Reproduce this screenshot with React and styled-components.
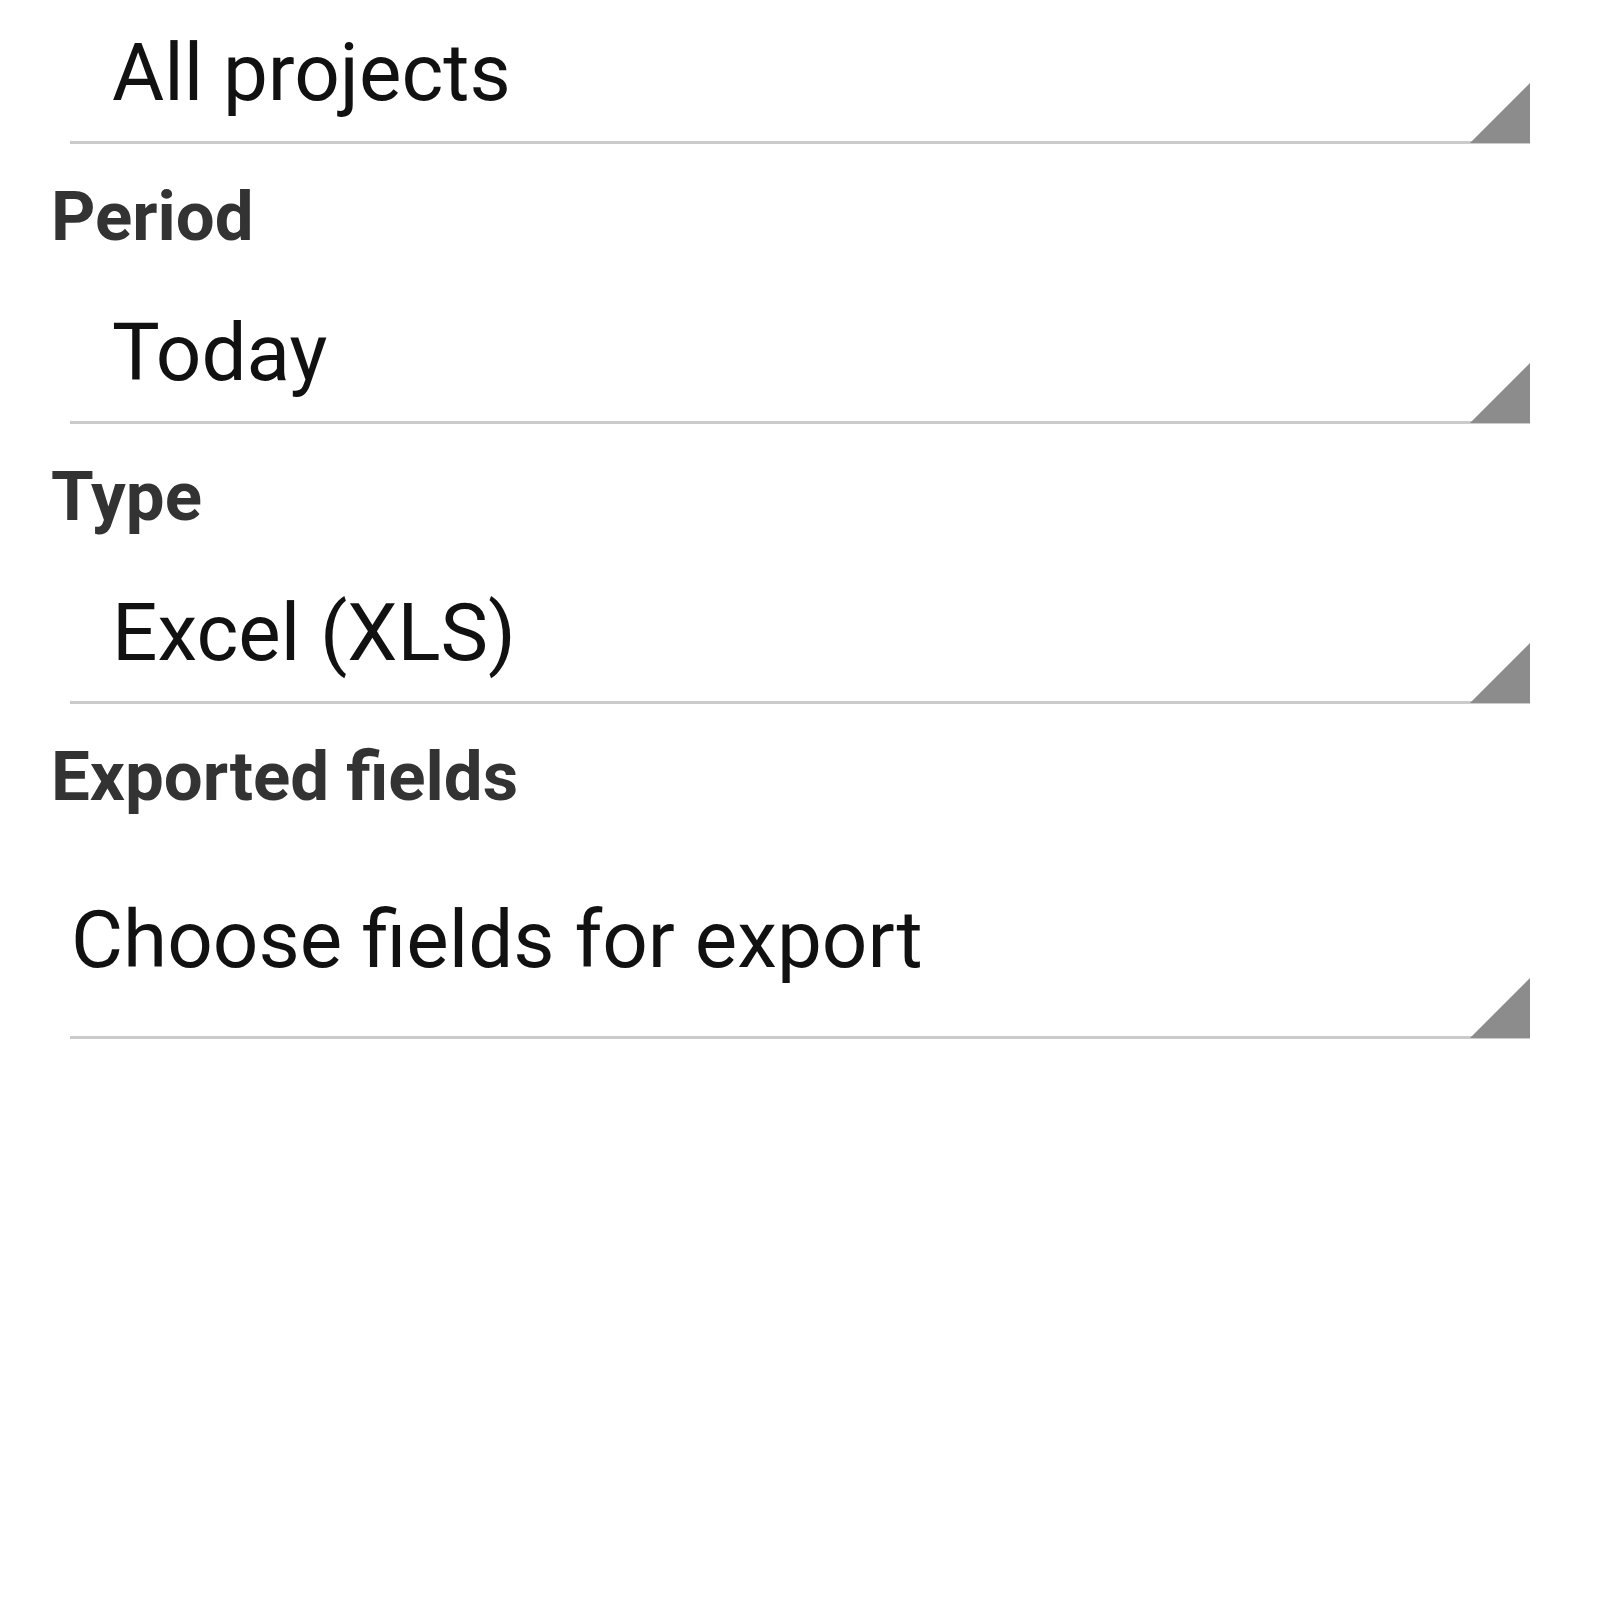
import styled, { createGlobalStyle } from "styled-components";

const GlobalStyle = createGlobalStyle`
  html, body {
    margin: 0;
    padding: 0;
    background: #ffffff;
  }
  body {
    font-family: Roboto, "Noto Sans", "Liberation Sans", sans-serif;
  }
`;

const fields = [
  { label: null, value: "All projects" },
  { label: "Period", value: "Today" },
  { label: "Type", value: "Excel (XLS)" },
  { label: "Exported fields", value: "Choose fields for export", multi: true },
];

export default function App() {
  return (
    <>
      <GlobalStyle />
      <Form>
        {fields.map((field) => (
          <Field key={field.value}>
            {field.label && <Label>{field.label}</Label>}
            <Spinner $multi={field.multi}>
              <SpinnerText>{field.value}</SpinnerText>
              <Corner viewBox="0 0 60 60" aria-hidden="true">
                <polygon points="60,0 60,60 0,60" fill="#8c8c8c" />
              </Corner>
            </Spinner>
          </Field>
        ))}
      </Form>
    </>
  );
}

const Form = styled.main`
  display: flex;
  flex-direction: column;
  width: 1600px;
  min-height: 1600px;
  background: #ffffff;
`;

const Field = styled.section`
  display: flex;
  flex-direction: column;
  padding-top: 30px;

  &:first-child {
    padding-top: 0;
  }
`;

const Label = styled.h3`
  margin: 0 0 0 51px;
  font-size: 69px;
  line-height: 86px;
  font-weight: 700;
  color: #333333;
`;

const Spinner = styled.div`
  position: relative;
  margin: 0 70px;
  padding: ${(p) => (p.$multi ? "72px 0 48px 1px" : "45px 0 20px 42px")};
  border-bottom: 3px solid #cbcbcb;

  ${Field}:first-child & {
    padding-top: 25px;
  }
`;

const SpinnerText = styled.span`
  display: block;
  font-size: 80px;
  line-height: 96px;
  color: #111111;
  white-space: nowrap;
`;

const Corner = styled.svg`
  position: absolute;
  right: 0;
  bottom: -2px;
  width: 60px;
  height: 60px;
`;
